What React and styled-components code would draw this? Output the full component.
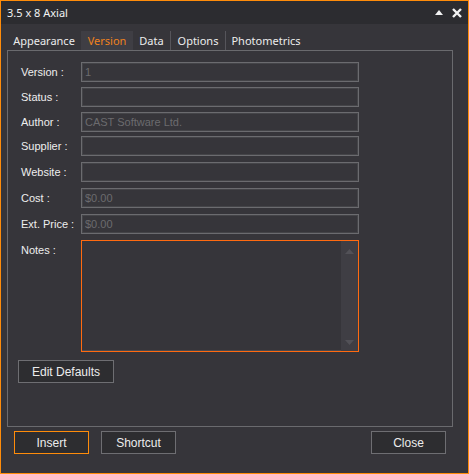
import React from 'react';
import styled, { createGlobalStyle } from 'styled-components';

const GlobalStyle = createGlobalStyle`
body {
  margin: 0;
  background: #36353a;
}
* {
  box-sizing: border-box;
}
`;

const Window = styled.div`
width: 469px;
height: 474px;
border: 1px solid #ff8c0a;
background-color: #36353a;
display: flex;
flex-direction: column;
font-family: "Liberation Sans", Arial, sans-serif;
`;

const TitleBar = styled.div`
height: 23px;
background-color: #2c2c30;
display: flex;
align-items: center;
justify-content: space-between;
padding-left: 6px;
padding-right: 6px;
color: #f2f2f2;
font-family: "Noto Sans", "Open Sans", sans-serif;
font-size: 11px;
`;

const TitleIcons = styled.div`
display: flex;
align-items: center;
gap: 9px;
`;

const TabStrip = styled.div`
display: flex;
margin-top: 7px;
padding-left: 6px;
height: 19px;
`;

const Tab = styled.div`
width: ${p => p.$w}px;
height: 19px;
display: flex;
align-items: center;
justify-content: center;
font-family: "Noto Sans", "Open Sans", sans-serif;
font-size: 11px;
color: ${p => p.$active ? '#f0821e' : '#ececec'};
background-color: ${p => p.$active ? '#3f3e44' : 'transparent'};
border-right: ${p => p.$sep ? '1px solid #56555b' : 'none'};
background-clip: padding-box;
`;

const Panel = styled.div`
margin-left: 6px;
width: 446px;
height: 377px;
border: 1px solid #6a6a6e;
padding: 11px 0 0 10px;
display: flex;
flex-direction: column;
`;

const FieldRow = styled.div`
display: flex;
align-items: flex-start;
padding-left: 3px;
margin-top: ${p => p.$mt || 0}px;
`;

const Label = styled.div`
width: 60px;
color: #eeeeee;
font-size: 11px;
line-height: 14px;
padding-top: 3px;
`;

const Input = styled.div`
width: 278px;
height: 20px;
border: 1px solid #6b6b6f;
box-shadow: inset 0 0 0 1px #444448;
padding-left: 3px;
display: flex;
align-items: center;
color: #6b6b6e;
font-size: 11px;
`;

const NotesBox = styled.div`
width: 278px;
height: 112px;
border: 1px solid #ff6a10;
display: flex;
`;

const NotesText = styled.div`
flex: 1;
border-bottom: 1px solid #4a494f;
`;

const ScrollBar = styled.div`
width: 17px;
background-color: #3f3e44;
display: flex;
flex-direction: column;
justify-content: space-between;
align-items: center;
padding: 8px 0 6px;
`;

const Button = styled.div`
width: ${p => p.$w || 75}px;
height: 23px;
border: 1px solid ${p => p.$accent ? '#ff8c0a' : '#6e6e72'};
background-color: #2d2d30;
color: #ececec;
font-size: 12px;
display: flex;
align-items: center;
justify-content: center;
`;

const EditRow = styled.div`
margin-top: 8px;
`;

const Footer = styled.div`
display: flex;
align-items: center;
margin-top: 4px;
padding-left: 13px;
padding-right: 22px;
gap: 12px;
`;

const Spacer = styled.div`
flex: 1;
`;

const fields = [
  { label: 'Version :', value: '1', mt: 0 },
  { label: 'Status :', value: '', mt: 5 },
  { label: 'Author :', value: 'CAST Software Ltd.', mt: 5 },
  { label: 'Supplier :', value: '', mt: 4 },
  { label: 'Website :', value: '', mt: 6 },
  { label: 'Cost :', value: '$0.00', mt: 6 },
  { label: 'Ext. Price :', value: '$0.00', mt: 6 },
];

const tabs = [
  { name: 'Appearance', w: 74 },
  { name: 'Version', w: 52, active: true },
  { name: 'Data', w: 38, sep: true },
  { name: 'Options', w: 55, sep: true },
  { name: 'Photometrics', w: 80 },
];

const App = () => {
  return (
    <>
      <GlobalStyle />
      <Window>
        <TitleBar>
          <span>3.5 x 8 Axial</span>
          <TitleIcons>
            <svg width="8" height="5" viewBox="0 0 8 5"><polygon points="0,5 8,5 4,0" fill="#f2f2f2" /></svg>
            <svg width="10" height="10" viewBox="0 0 10 10"><path d="M1 1 L9 9 M9 1 L1 9" stroke="#f4f4f4" strokeWidth="2.4" /></svg>
          </TitleIcons>
        </TitleBar>
        <TabStrip>
          {tabs.map(t => (
            <Tab key={t.name} $w={t.w} $active={t.active} $sep={t.sep}>{t.name}</Tab>
          ))}
        </TabStrip>
        <Panel>
          {fields.map(f => (
            <FieldRow key={f.label} $mt={f.mt}>
              <Label>{f.label}</Label>
              <Input>{f.value}</Input>
            </FieldRow>
          ))}
          <FieldRow $mt={6}>
            <Label>Notes :</Label>
            <NotesBox>
              <NotesText />
              <ScrollBar>
                <svg width="9" height="5" viewBox="0 0 9 5"><polygon points="0,5 9,5 4.5,0" fill="#525157" /></svg>
                <svg width="9" height="5" viewBox="0 0 9 5"><polygon points="0,0 9,0 4.5,5" fill="#525157" /></svg>
              </ScrollBar>
            </NotesBox>
          </FieldRow>
          <EditRow>
            <Button $w={96}>Edit Defaults</Button>
          </EditRow>
        </Panel>
        <Footer>
          <Button $accent>Insert</Button>
          <Button>Shortcut</Button>
          <Spacer />
          <Button>Close</Button>
        </Footer>
      </Window>
    </>
  );
};

export default App;
